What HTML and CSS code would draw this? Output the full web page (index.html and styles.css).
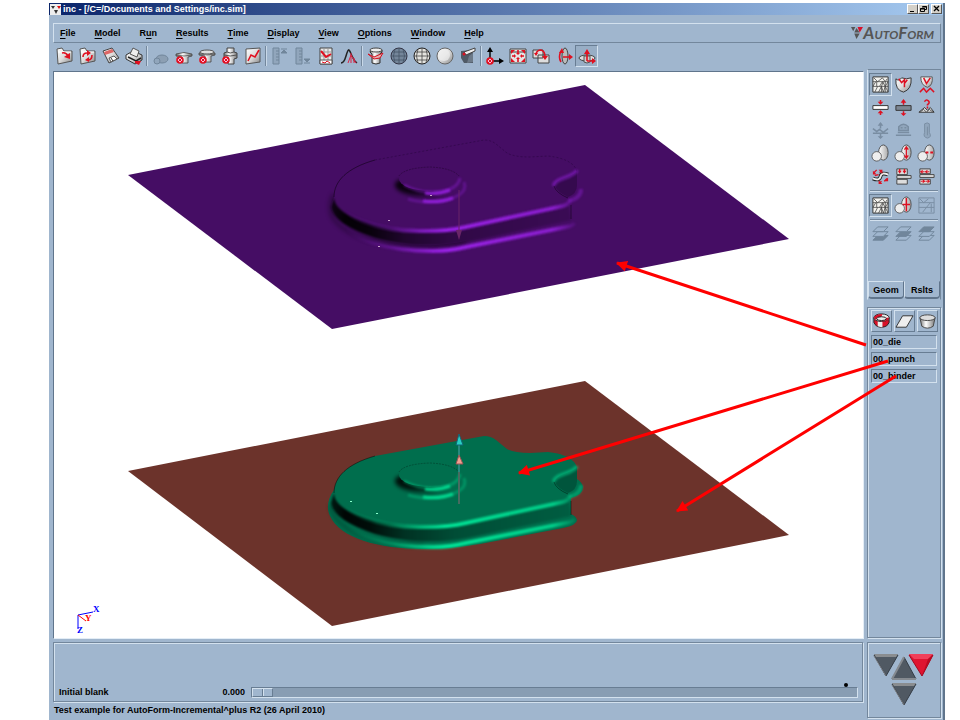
FILE: index.html
```html
<!DOCTYPE html>
<html lang="en">
<head>
<meta charset="utf-8">
<title>inc - [/C=/Documents and Settings/inc.sim]</title>
<link rel="stylesheet" href="styles.css">
</head>
<body>
<svg class="defs" aria-hidden="true">
  <defs>
    <linearGradient id="metal" x1="0" y1="0" x2="1" y2="1"><stop offset="0" stop-color="#fff"/><stop offset=".5" stop-color="#ddd"/><stop offset="1" stop-color="#888"/></linearGradient>
    <linearGradient id="tube" x1="0" y1="0" x2="1" y2="0"><stop offset="0" stop-color="#777"/><stop offset=".4" stop-color="#fff"/><stop offset="1" stop-color="#777"/></linearGradient>
    <linearGradient id="egg" x1="0" y1="0" x2="1" y2="0"><stop offset="0" stop-color="#fff"/><stop offset="1" stop-color="#aaa"/></linearGradient>
    <symbol id="folder" viewBox="0 0 20 20"><path d="M2 3l5-1 2 3 8 0v10l-14 3z" fill="url(#metal)" stroke="#555"/><path d="M3 6l13 0" stroke="#fff"/></symbol>
    <symbol id="mesh" viewBox="0 0 20 20"><path d="M2 2h16v16H2z" fill="#f2f2ee" stroke="#333"/><path d="M2 7h16M2 12h16M3 3l4 4 5-4 3 4 2-3M2 12l3-5M9 12l3-5 3 5 3-5M4 18l3-6M8 18l3-6 2 6 2-6 3 6M6 7v5M11 12v6M15 7v11M13 7l-2 5" fill="none" stroke="#444" stroke-width=".8"/></symbol>
    <symbol id="eggs" viewBox="0 0 20 20"><ellipse cx="13" cy="9" rx="5" ry="8" fill="url(#egg)" stroke="#333" stroke-width=".8"/><circle cx="6" cy="13" r="5" fill="#eee" stroke="#444" stroke-width=".8"/></symbol>
    <symbol id="press" viewBox="0 0 20 20"><path d="M2 7q8-3 16 0v2l-4 1v6H8v-6L2 9z" fill="url(#tube)" stroke="#444" stroke-width=".8"/><path d="M2 8q8 2 16 0" fill="none" stroke="#555" stroke-width=".8"/></symbol>
    <symbol id="target" viewBox="0 0 20 20"><circle cx="6" cy="14" r="3" fill="#fbd" stroke="#e01020" stroke-width="1.6"/><path d="M4 12l4 4m0-4-4 4" stroke="#e01020"/></symbol>
    <symbol id="ruler" viewBox="0 0 20 20"><path d="M3 2h6v16H3zM6 5h3M6 8h3M6 11h3M6 14h3" fill="#91a6bc" stroke="#71869b"/></symbol>
    <symbol id="layer" viewBox="0 0 20 20"><path d="M7 2h11l-5 5H2z"/></symbol>
    <symbol id="tri-gray" viewBox="0 0 26 24"><path d="M1 2h24L13 23z" fill="#505963" stroke="#343c45"/><path d="M1 1h24l-2 3H3z" fill="#8a8d90"/><path d="M1 3l12 20" stroke="#7a7d82"/></symbol>
  </defs>
</svg>

<div class="window">
  <header class="titlebar">
    <svg class="app-icon" viewBox="0 0 11 11"><path d="M0 0h11v11H0z" fill="#eee"/><path d="M1 2h4L3 5zM4 6h4L6 10z" fill="#333"/><path d="M7 2h4L9 5z" fill="#d11"/></svg>
    <span class="title">inc - [/C=/Documents and Settings/inc.sim]</span>
    <div class="window-buttons">
      <button aria-label="Minimize"><svg viewBox="0 0 9 9"><path d="M2 6h4v1H2z"/></svg></button>
      <button aria-label="Restore"><svg viewBox="0 0 9 9"><path d="M3.500 1.500h4v3h-2M3 2h5M1.500 3.500h4v3h-4zM1 4h5" fill="none" stroke="#000"/></svg></button>
      <button class="close" aria-label="Close"><svg viewBox="0 0 9 9"><path d="M2 1l5 5M7 1L2 6" stroke="#000" stroke-width="1.300"/></svg></button>
    </div>
  </header>

  <nav class="menubar">
    <button><u>F</u>ile</button><button><u>M</u>odel</button><button>R<u>u</u>n</button><button><u>R</u>esults</button><button><u>T</u>ime</button><button><u>D</u>isplay</button><button><u>V</u>iew</button><button><u>O</u>ptions</button><button><u>W</u>indow</button><button><u>H</u>elp</button>
    <div class="brand">
      <svg viewBox="0 0 11 11"><path d="M0 0h4L2 4zM3 5h5L5 1zM3 6h5l-3 5z" fill="#555"/><path d="M6 0h5L8 5z" fill="#d8102a"/></svg>
      <span>AutoForm</span>
    </div>
  </nav>

  <div class="toolbar" role="toolbar" aria-label="Main tools">
    <button aria-label="Open"><svg viewBox="0 0 20 20"><use href="#folder"/><path d="M7 7q4-1 6 3" fill="none" stroke="#e01020" stroke-width="1.500"/><path d="M15 7v6l-6-2z" fill="#e01020"/></svg></button>
    <button aria-label="Reopen"><svg viewBox="0 0 20 20"><use href="#folder"/><path d="M5 11q0-4 4-4M14 9q0 5-4 5" fill="none" stroke="#e01020" stroke-width="1.600"/><path d="M9 4l4 3-4 3zM11 11v5l-4-2z" fill="#e01020"/></svg></button>
    <button aria-label="Save"><svg viewBox="0 0 20 20"><path d="M2 5l9-3 7 10-10 5z" fill="url(#metal)" stroke="#444"/><path d="M3 6l8-3 2 3-9 3z" fill="#d66"/><path d="M8 12l5-2 3 3-6 3z" fill="#fff" stroke="#555"/><path d="M10 12l2 3" stroke="#333"/></svg></button>
    <button aria-label="Print"><svg viewBox="0 0 20 20"><path d="M2 9l7-4 9 4v5l-7 4-9-5z" fill="url(#metal)" stroke="#333"/><path d="M6 8l3-6 6 3-2 6z" fill="#eee" stroke="#555"/><path d="M4 11l8 4 5-3" fill="none" stroke="#222" stroke-width="1.500"/><path d="M11 15h6l-2 4-4-2z" fill="#e01020"/></svg></button>
    <i class="sep"></i>
    <button aria-label="Blank" disabled><svg viewBox="0 0 20 20"><ellipse cx="11" cy="13" rx="6" ry="4" fill="#8c9fb3" stroke="#71869b"/><circle cx="6" cy="15" r="3" fill="#91a6bc" stroke="#71869b"/></svg></button>
    <button aria-label="Process"><svg viewBox="0 0 20 20"><use href="#press" y="1"/><use href="#target"/></svg></button>
    <button aria-label="Tools"><svg viewBox="0 0 20 20"><use href="#press"/><ellipse cx="10" cy="6" rx="7" ry="2" fill="#ddd" stroke="#555"/><use href="#target"/></svg></button>
    <button aria-label="Stages"><svg viewBox="0 0 20 20"><path d="M7 2h7v4l3 1v5l-3 1v5H8v-6H4V7l3-1z" fill="url(#tube)" stroke="#444"/><path d="M4 9q6 2 13 0M7 6q3 2 7 0" fill="none" stroke="#555"/><use href="#target"/></svg></button>
    <button aria-label="Curve"><svg viewBox="0 0 20 20"><path d="M3 3l14-1v14l-14 2z" fill="url(#metal)" stroke="#555"/><path d="M5 15l3-6 4 2 4-7" fill="none" stroke="#e01020" stroke-width="1.600"/></svg></button>
    <i class="sep"></i>
    <button aria-label="Scale up" disabled><svg viewBox="0 0 20 20"><use href="#ruler"/><path d="M11 3h6M14 4l-3 3h6z" fill="#71869b" stroke="#71869b"/></svg></button>
    <button aria-label="Scale down" disabled><svg viewBox="0 0 20 20"><use href="#ruler"/><path d="M11 17h6M14 16l-3-3h6z" fill="#71869b" stroke="#71869b"/></svg></button>
    <button aria-label="Grid plot"><svg viewBox="0 0 20 20"><path d="M4 2h12v16H4z" fill="#e8e8e8" stroke="#444"/><path d="M8 2v12M12 2v12M4 6h12M4 10h12" stroke="#999"/><path d="M5 5l5 6 5-3" fill="none" stroke="#e01020" stroke-width="2"/><path d="M4 14h12v4H4z" fill="#fff" stroke="#555"/><path d="M6 16l3 1 2-2 3 2" fill="none" stroke="#e01020"/></svg></button>
    <button aria-label="Distribution"><svg viewBox="0 0 20 20"><path d="M2 17q3 0 5-7t3-6 3 6 5 7" fill="none" stroke="#222" stroke-width="1.500"/><path d="M12 7v10M15 12v5M12 9l5 8M9 17l3-8" stroke="#d24" fill="none"/></svg></button>
    <i class="sep"></i>
    <button aria-label="Section"><svg viewBox="0 0 20 20"><path d="M5 4h11v2l-2 2v9q-4 2-8 0V8L4 6z" fill="url(#tube)" stroke="#333"/><ellipse cx="10" cy="4" rx="6" ry="2" fill="#eee" stroke="#444"/><path d="M2 8l6 3 9-4-3 5-6 1z" fill="#e8b0b0" stroke="#d01020"/></svg></button>
    <button aria-label="Shaded mesh"><svg viewBox="0 0 20 20"><circle cx="10" cy="10" r="8" fill="#74869a" stroke="#334"/><path d="M2 10h16M3 6h14M3 14h14M10 2v16M6 3q-3 7 0 14M14 3q3 7 0 14" fill="none" stroke="#445366" stroke-width=".8"/></svg></button>
    <button aria-label="Wire mesh"><svg viewBox="0 0 20 20"><circle cx="10" cy="10" r="8" fill="#e4e4e0" stroke="#222"/><path d="M2 10h16M3 6h14M3 14h14M10 2v16M6 3q-3 7 0 14M14 3q3 7 0 14" fill="none" stroke="#444" stroke-width=".8"/></svg></button>
    <button aria-label="Shaded"><svg viewBox="0 0 20 20"><circle cx="10" cy="10" r="8" fill="url(#metal)" stroke="#666"/><circle cx="9" cy="9" r="6" fill="#eee" opacity=".7"/></svg></button>
    <button aria-label="Clip"><svg viewBox="0 0 20 20"><path d="M3 5l12-1v13H6L3 12z" fill="#505a66"/><path d="M6 6l11-4v3L8 9z" fill="#eee" stroke="#444"/><circle cx="6" cy="8" r="1.500" fill="#d12"/><path d="M11 10l4-3v9l-6 1z" fill="#6d7a88"/></svg></button>
    <i class="sep"></i>
    <button aria-label="Axes"><svg viewBox="0 0 20 20"><path d="M5 15V4M5 15h11" stroke="#000" stroke-width="1.400"/><path d="M5 1l3 5H2zM19 15l-5-3v6z"/><use href="#target" x="-1" y="1"/></svg></button>
    <button aria-label="Fit"><svg viewBox="0 0 20 20"><path d="M2 3h16v14H2zM2 6h16" fill="#e4e4e4" stroke="#444"/><path d="M10 4v3M10 13v3M4 10h3M13 10h3" stroke="#e01020" stroke-width="1.600"/><path d="M8 7h4l-2 2zM8 13h4l-2-2zM6 8v4l2-2zM14 8v4l-2-2zM3 4h4L3 8zM17 4h-4l4 4zM3 16h4l-4-4zM17 16h-4l4-4z" fill="#e01020"/></svg></button>
    <button aria-label="Zoom"><svg viewBox="0 0 20 20"><path d="M2 4h10v8H2zM7 9h11v8H7z" fill="#ddd" stroke="#444"/><path d="M5 8q1-4 5-4 4 1 4 7" fill="none" stroke="#e01020" stroke-width="1.600"/><path d="M11 10h6l-3 4zM3 7h4l-2 3z" fill="#e01020"/></svg></button>
    <button aria-label="Rotate"><svg viewBox="0 0 20 20"><ellipse cx="11" cy="10" rx="3" ry="8" fill="#bbb" stroke="#444"/><path d="M7 16q-3-5 0-11M9 11h7" fill="none" stroke="#e01020" stroke-width="1.600"/><path d="M8 2l2 5H5zM19 11l-4-3v6z" fill="#e01020"/></svg></button>
    <button class="pressed" aria-label="Rotate in plane"><svg viewBox="0 0 20 20"><ellipse cx="10" cy="12" rx="8" ry="3" fill="#ddd" stroke="#444"/><path d="M7 10h6v6q-3 2-6 0z" fill="#ccc" stroke="#555"/><path d="M10 15V7M10 15h5" stroke="#e01020" stroke-width="1.600"/><path d="M10 3l3 5H7zM19 15l-4-3v6z" fill="#e01020"/></svg></button>
  </div>

  <main class="workspace">
    <section class="viewport" aria-label="Tool geometry">
      <svg class="scene" viewBox="54 72 809 566">
        <defs>
          <filter id="soft" x="-20%" y="-30%" width="140%" height="160%"><feGaussianBlur stdDeviation="1.2"/></filter>
          <filter id="haze" x="-20%" y="-30%" width="140%" height="160%"><feGaussianBlur stdDeviation="2"/></filter>
          <linearGradient id="wall" gradientUnits="userSpaceOnUse" x1="330" y1="0" x2="580" y2="0"><stop offset="0" stop-opacity=".75"/><stop offset=".06" stop-opacity=".95"/><stop offset=".16" stop-opacity=".88"/><stop offset=".3" stop-opacity=".55"/><stop offset=".5" stop-opacity=".3"/><stop offset="1" stop-opacity=".14"/></linearGradient>
          <linearGradient id="glow" gradientUnits="userSpaceOnUse" x1="345" y1="0" x2="576" y2="0"><stop offset="0" stop-color="#fff" stop-opacity="0"/><stop offset=".2" stop-color="#fff" stop-opacity=".35"/><stop offset=".43" stop-color="#fff"/><stop offset=".9" stop-color="#fff" stop-opacity=".8"/><stop offset="1" stop-color="#fff" stop-opacity=".1"/></linearGradient>
          <mask id="fade" maskUnits="userSpaceOnUse" x="320" y="470" width="270" height="90"><path d="M320 470h270v90H320z" fill="url(#glow)"/></mask>
          <linearGradient id="boss" gradientUnits="userSpaceOnUse" x1="394" y1="0" x2="450" y2="0"><stop offset="0" stop-opacity=".9"/><stop offset=".3" stop-opacity=".8"/><stop offset="1" stop-opacity="0"/></linearGradient>
          <marker id="head" viewBox="0 0 10 10" refX="9" refY="5" markerWidth="12" markerHeight="11" markerUnits="userSpaceOnUse" orient="auto"><path d="M0 0l10 5-10 5z" fill="#f00"/></marker>
          <path id="flange" d="M334 490C328 498 326 508 330 516C340 538 378 549 424 549C450 549 464 546 480 544L563 528Q577 525 577 520Q576 516 571 514V498Q583 495 583 487Q582 482 577 479L540 470L340 480Z"/>
          <path id="body" d="M334 494C334 477 347 464 375 456L484 436Q491 436 496 440L507 449Q514 453 530 453L548 452C567 454 576 461 577 468V481Q576 488 569 492L571 498V516L466 537C440 543 405 543 375 534Q333 520 331 503Q331 498 334 494Z"/>
        </defs>
        <path class="die-sheet" d="M128 175L585 85L789 239L332 329Z"/>
        <path class="binder-sheet" d="M128 471L585 381L789 535L332 626Z"/>
        <g class="die part" transform="translate(0 -296)">
          <path d="M334 490C330 496 329 506 333 514C345 532 375 541 424 543L466 538" fill="none" stroke="#000" stroke-width="4" opacity=".3" filter="url(#haze)"/>
          <use href="#body"/>
          <path d="M375 456L484 436Q491 436 496 440L507 449Q514 453 530 453L548 452C567 454 576 461 577 468" fill="none" stroke="#2c0742" stroke-dasharray="2 2" opacity=".6"/>
          <g id="shade">
            <path d="M334 493C334 513 380 527 424 526L463 523L569 502L571 516L466 538C440 543 405 543 375 534Q333 520 331 503Z" fill="url(#wall)" filter="url(#soft)"/>
            <path d="M577 467C573 473 555 474 555 482Q557 488 568 493Q577 490 577 481Z" opacity=".22"/>
            <path d="M577 466C574 474 553 474 554 482" fill="none" stroke="currentColor" stroke-width="4" opacity=".45" filter="url(#soft)"/>
            <path d="M554 482Q556 489 568 494" fill="none" stroke="#000" opacity=".4"/>
            <path d="M569 497Q581 494 581 485" fill="none" stroke="currentColor" stroke-width="4" opacity=".35" filter="url(#soft)"/>
            <path d="M334 493C334 477 347 464 375 456" fill="none" stroke="#000" opacity=".45"/>
            <g mask="url(#fade)">
              <path d="M336 493C336 513 380 528 424 527Q450 527 466 523L563 502Q570 500 570 495" fill="none" stroke="currentColor" stroke-width="4" filter="url(#soft)"/>
              <path d="M334 512C349 537 390 547 433 547Q450 547 466 543L566 523Q573 522 575 519" fill="none" stroke="currentColor" stroke-width="4" filter="url(#soft)"/>
            </g>
            <path d="M571 501v14" stroke="#000" opacity=".4"/>
            <path d="M399 476C390 480 394 492 430 493Q450 492 458 478Z" fill="url(#boss)" filter="url(#haze)"/>
            <ellipse class="boss-top" cx="430" cy="475" rx="31" ry="12"/>
            <path d="M399 472Q404 464 430 463Q452 464 459 472" fill="none" stroke="#000" opacity=".25" stroke-dasharray="2 1"/>
            <path d="M404 481Q424 492 448 486Q459 482 460 474" fill="none" stroke="currentColor" stroke-width="3" opacity=".35" filter="url(#soft)"/>
            <path d="M425 489Q438 491 450 486M423 497Q440 499 453 494" fill="none" stroke="currentColor" stroke-width="3" opacity=".85" filter="url(#soft)"/>
            <path d="M408 495Q438 503 459 491Q467 486 464 478" fill="none" stroke="currentColor" stroke-width="3" opacity=".3" filter="url(#soft)"/>
          </g>
        </g>
        <g class="die-axis"><path d="M459 190v42" stroke="#6a2568"/><path d="M456 230h6l-3 10z" fill="#6a2568"/></g>
        <path d="M388 220h2v1h-2zM378 246h2v1h-2zM430 195h2v1h-2z" fill="#c8a0c8"/>
        <g class="punch part">
          <use href="#flange"/>
          <path d="M330 505C334 530 375 546 424 545" fill="none" stroke="#000" stroke-width="3" opacity=".3" filter="url(#haze)"/>
          <use href="#body"/>
          <use href="#shade"/>
        </g>
        <path d="M459 472v32" stroke="#476b60" stroke-width="2"/>
        <path d="M459 445v27" stroke="#27897f" stroke-width="2"/>
        <path d="M459 434l4 11h-7z" fill="#28cfc4" stroke="#167"/>
        <path d="M459 455l4 9h-7z" fill="#f0a090" stroke="#955"/>
        <path d="M350 501h2v1h-2zM376 513h2v1h-2z" fill="#8fc"/>
        <g fill="none"><path d="M78 615l15-3M78 615v14" stroke="#00f"/><path d="M78 615l8 6" stroke="#f00"/></g>
        <text class="triad-label" x="93" y="612" fill="#00f">X</text><text class="triad-label" x="85" y="621" fill="#f00">Y</text><text class="triad-label" x="77" y="633" fill="#00f">Z</text>
        <g class="callouts"><path d="M866 345L617 263" marker-end="url(#head)"/><path d="M888 361L519 473" marker-end="url(#head)"/><path d="M896 376L677 511" marker-end="url(#head)"/></g>
      </svg>
    </section>

    <aside class="side">
      <div class="palette">
        <div class="tool-grid">
          <button class="pressed" aria-label="Mesh"><svg viewBox="0 0 20 20"><use href="#mesh"/></svg></button>
          <button aria-label="Formability"><svg viewBox="0 0 20 20"><path d="M2 4q3 3 6-1l5 1 5-1q1 12-8 15Q1 16 2 4z" fill="url(#metal)" stroke="#333"/><path d="M5 4l3 4 3-3v8M11 9l3-4" fill="none" stroke="#d12" stroke-width="1.600"/></svg></button>
          <button aria-label="Failure"><svg viewBox="0 0 20 20"><path d="M4 2h12q1 9-5 11-7-2-7-11z" fill="url(#metal)" stroke="#555"/><path d="M7 3l3 6 4-6M3 18l4-4 3 4 4-4 4 4" fill="none" stroke="#d12" stroke-width="1.600"/></svg></button>
          <button aria-label="Thickness"><svg viewBox="0 0 20 20"><path d="M2 8h16v4H2z" fill="#fff" stroke="#333"/><path d="M10 2v4M10 14v4" stroke="#d12" stroke-width="1.600"/><path d="M7 4h6l-3 3zM7 16h6l-3-3z" fill="#d12"/></svg></button>
          <button aria-label="Thinning"><svg viewBox="0 0 20 20"><path d="M2 8h16v5H2z" fill="#7d8793" stroke="#333"/><path d="M10 3v4M10 14v4" stroke="#d12" stroke-width="1.600"/><path d="M7 5l3-4 3 4zM7 16h6l-3 3z" fill="#d12"/></svg></button>
          <button aria-label="Wrinkles"><svg viewBox="0 0 20 20"><path d="M2 15l6-5 3 3 3-3 4 5z" fill="#ddd" stroke="#333"/><path d="M3 15l4-3 3 3 3-3 4 3" fill="none" stroke="#555"/><path d="M8 4q1-3 4-1 2 2-1 4v1M11 9v2" fill="none" stroke="#d12" stroke-width="1.600"/></svg></button>
          <button disabled aria-label="Springback"><svg viewBox="0 0 20 20"><path d="M2 8l4 3 3-2 4 3 5-4M2 13h16M10 3v5M10 13v5" fill="none" stroke="#798da2" stroke-width="1.600"/><path d="M7 5l3-4 3 4zM7 16h6l-3 3z" fill="#798da2"/></svg></button>
          <button disabled aria-label="Pressure"><svg viewBox="0 0 20 20"><path d="M2 15h16M4 12h12M5 6q5-5 10 0v4H5zM7 7h2M11 7h2" fill="#91a6bc" stroke="#798da2" stroke-width="1.600"/></svg></button>
          <button disabled aria-label="Temperature"><svg viewBox="0 0 20 20"><path d="M8 12V3q3-2 5 0v9q3 5-2 6-5-1-3-6zM11 6v9" fill="#91a6bc" stroke="#798da2"/></svg></button>
          <button aria-label="Strain"><svg viewBox="0 0 20 20"><use href="#eggs"/></svg></button>
          <button aria-label="Major strain"><svg viewBox="0 0 20 20"><use href="#eggs"/><path d="M13 3v12M11 6l2-3 2 3M11 12l2 3 2-3" fill="none" stroke="#d12" stroke-width="1.300"/></svg></button>
          <button aria-label="Minor strain"><svg viewBox="0 0 20 20"><use href="#eggs"/><path d="M9 9h3M14 9h3" stroke="#d12" stroke-width="2"/></svg></button>
          <button aria-label="Displacement"><svg viewBox="0 0 20 20"><path d="M2 12q7 3 8-2t8-2" fill="none" stroke="#222" stroke-width="4"/><path d="M2 12q7 3 8-2t8-2" fill="none" stroke="#eee" stroke-width="2"/><path d="M3 6l3-3M9 6l2-2M9 17l2-2M14 15l3-3M4 9l4-1" fill="none" stroke="#d12" stroke-width="1.400"/><path d="M2 4v4h4zM8 3h4v4zM8 14v4h4zM18 11v4h-4z" fill="#d12"/></svg></button>
          <button aria-label="Stress"><svg viewBox="0 0 20 20"><path d="M3 9h15v3H3zM3 13h11v5H3zM3 2h11v6H3z" fill="#ddd" stroke="#444"/><path d="M6 2v3M11 2v3" stroke="#d12" stroke-width="1.500"/><path d="M4 4h4L6 7zM9 4h4l-2 3z" fill="#d12"/></svg></button>
          <button aria-label="Friction"><svg viewBox="0 0 20 20"><path d="M3 8h15v3H3zM3 13h11v5H3zM3 2h11v5H3z" fill="#ddd" stroke="#444"/><path d="M3 5l3-2v4zM8 5l3-2v4zM9 15l-3-2v4zM14 15l-3-2v4z" fill="#d12"/><path d="M6 5h2M11 5h2M4 15h2M9 15h2" stroke="#d12"/></svg></button>
        </div>
        <hr>
        <div class="tool-grid">
          <button class="pressed" aria-label="Scalar"><svg viewBox="0 0 20 20"><use href="#mesh"/></svg></button>
          <button aria-label="Vector"><svg viewBox="0 0 20 20"><use href="#eggs"/><path d="M13 2v14M9 9h8" stroke="#d12" stroke-width="1.600"/></svg></button>
          <button disabled aria-label="Difference"><svg viewBox="0 0 20 20"><path d="M2 2h16v16H2zM2 7h16M2 12h16M3 3l4 4 5-4M6 17l8-10M15 8v9" fill="none" stroke="#798da2"/></svg></button>
        </div>
        <hr>
        <div class="tool-grid layers">
          <button disabled aria-label="Lower face"><svg viewBox="0 0 20 20"><use href="#layer" class="solid" y="9"/><use href="#layer" class="open" y="5"/><use href="#layer" class="open"/></svg></button>
          <button disabled aria-label="Middle face"><svg viewBox="0 0 20 20"><use href="#layer" class="open" y="9"/><use href="#layer" class="solid" y="5"/><use href="#layer" class="open"/></svg></button>
          <button disabled aria-label="Upper face"><svg viewBox="0 0 20 20"><use href="#layer" class="open" y="9"/><use href="#layer" class="open" y="5"/><use href="#layer" class="solid"/></svg></button>
        </div>
        <div class="tabs"><button>Geom</button><button class="active">Rslts</button></div>
      </div>

      <div class="objects">
        <div class="object-kinds">
          <button aria-label="Tools"><svg viewBox="0 0 20 20"><path d="M2 6v5q2 5 8 5t8-5V6z" fill="#d81028" stroke="#222"/><path d="M6 9v6q3 1 5 1v-6z" fill="#eee"/><ellipse cx="10" cy="6" rx="8" ry="4" fill="#eee" stroke="#222"/><path d="M2 6q1-4 9-4l-1 3-4 3q-3 0-4-2zM10 10q7 0 8-4l-4 0-4 2z" fill="#d81028"/><ellipse cx="10" cy="7" rx="5" ry="2" fill="#eee" stroke="#222"/></svg></button>
          <button aria-label="Sheet"><svg viewBox="0 0 20 20"><path d="M8 4h11l-7 12H1z" fill="#eee" stroke="#333"/></svg></button>
          <button aria-label="Part"><svg viewBox="0 0 20 20"><path d="M2 6l2 9q6 4 12 0l2-9z" fill="url(#tube)" stroke="#444"/><ellipse cx="10" cy="6" rx="8" ry="3" fill="#ddd" stroke="#444"/></svg></button>
        </div>
        <button class="object">00_die</button>
        <button class="object">00_punch</button>
        <button class="object">00_binder</button>
      </div>
    </aside>

    <section class="timeline">
      <label for="time">Initial blank</label>
      <output for="time">0.000</output>
      <div class="track"><input id="time" type="range" min="0" max="100" value="0"><i class="dot"></i></div>
    </section>

    <div class="nav-pad">
      <svg viewBox="0 0 62 54" role="img" aria-label="AutoForm">
        <use href="#tri-gray" x="0" y="0" width="26" height="24"/>
        <path d="M19 26h24L31 4z" fill="#505963" stroke="#343c45"/><path d="M19 26L31 4M19 26h24" stroke="#858a90" stroke-width="2"/>
        <path d="M36 2h24L49 23z" fill="#df1430" stroke="#a00820"/><path d="M36 1h24l-5 5H41z" fill="#f0405a"/><path d="M49 23l6-17 5-4z" fill="#b80a22"/>
        <use href="#tri-gray" x="18" y="29" width="26" height="24"/>
      </svg>
    </div>
    <footer class="status">Test example for AutoForm-Incremental^plus R2 (26 April 2010)</footer>
  </main>
</div>
</body>
</html>
```
FILE: styles.css
```css
* { box-sizing: border-box; }

body {
  margin: 0;
  background: #fff;
  color: #000;
  font: bold 9px/12px "Liberation Sans", sans-serif;
}

button {
  margin: 0;
  padding: 0;
  border: 0;
  background: none;
  color: inherit;
  font: inherit;
}

svg { display: block; }
.defs { position: absolute; width: 0; height: 0; }

.window {
  display: flex;
  flex-direction: column;
  min-height: calc(100vh - 3px);
  margin: 3px 15px 0 49px;
  border-right: 2px solid #60758c;
  border-bottom: 1px solid #60758c;
  background: #a0b6ce;
}

.titlebar {
  display: flex;
  align-items: center;
  gap: 2px;
  height: 12px;
  padding: 0 1px;
  background: linear-gradient(90deg, #0a246a, #a6caf0);
  color: #fff;
}
.app-icon { width: 11px; height: 11px; }
.title { flex: 1; }
.window-buttons { display: flex; }
.window-buttons button {
  width: 11px;
  height: 10px;
  border: 1px solid;
  border-color: #fff #555 #555 #fff;
  background: #d4d0c8;
}
.window-buttons .close { margin-left: 2px; }

.menubar {
  display: flex;
  align-items: center;
  gap: 19px;
  height: 20px;
  margin: 8px 2px 0 4px;
  padding: 0 6px;
  border: 1px solid;
  border-color: #d3e1ee #73879c #73879c #d3e1ee;
}
.menubar u { text-underline-offset: 2px; }
.brand {
  display: flex;
  align-items: center;
  margin-left: auto;
  color: #555;
  font: italic 700 17px/18px Lato, sans-serif;
  font-variant: small-caps;
}
.brand svg { width: 12px; height: 12px; }

.toolbar {
  display: flex;
  align-items: center;
  height: 26px;
  margin-left: 4px;
}
.toolbar button {
  display: grid;
  place-items: center;
  width: 23px;
  height: 22px;
}
.toolbar svg { width: 20px; height: 20px; }
.sep {
  width: 2px;
  height: 20px;
  margin: 0 1px;
  border-left: 1px solid #73879c;
  border-right: 1px solid #c8d8e8;
}
.pressed {
  border: 1px solid;
  border-color: #687d93 #d3e1ee #d3e1ee #687d93;
  background: #98aec5;
}

.workspace {
  flex: 1;
  display: grid;
  grid-template-columns: 1fr 74px;
  grid-template-rows: 1fr 60px 16px;
  column-gap: 3px;
  padding: 0 2px 2px 4px;
}

.viewport {
  position: relative;
  z-index: 2;
  margin: 2px 0 3px;
  border: 1px solid;
  border-color: #60758c #e3edf6 #e3edf6 #60758c;
  background: #fff;
  pointer-events: none;
}
.scene { width: 100%; overflow: visible; }
.die-sheet { fill: #450d64; }
.binder-sheet { fill: #6c332b; }
.part { fill: var(--face); }
.die { --face: #450d64; color: #9b20e8; }
.punch { --face: #006e4d; color: #00e698; }
.boss-top { fill: var(--face); }
#shade { fill: #000; }
.triad-label { font: bold 9px "Liberation Serif", serif; }
.callouts { fill: none; stroke: #f00; stroke-width: 3px; }

.side {
  display: flex;
  flex-direction: column;
  gap: 7px;
  margin-bottom: 4px;
}
.palette {
  display: flex;
  flex-direction: column;
  height: 231px;
  border: 1px solid;
  border-color: #73879c #73879c transparent #d3e1ee;
}
.tool-grid {
  display: grid;
  grid-template-columns: repeat(3, 23px);
  grid-auto-rows: 23px;
  padding-left: 1px;
}
.palette > .tool-grid:first-child { padding-top: 3px; }
.tool-grid button { display: grid; place-items: center; }
.tool-grid svg { width: 19px; height: 19px; }
hr {
  width: 68px;
  height: 2px;
  margin: 2px;
  border: 0;
  border-top: 1px solid #73879c;
  border-bottom: 1px solid #d3e1ee;
}
.solid { fill: #71869b; stroke: #71869b; }
.open { fill: #a0b6ce; stroke: #71869b; }

.tabs { display: flex; margin-top: auto; }
.tabs button {
  flex: 1;
  height: 18px;
  border: 1px solid;
  border-color: #d3e1ee #60758c #60758c #d3e1ee;
  border-bottom-width: 2px;
  border-radius: 0 0 4px 4px;
}
.tabs .active { border-top-color: transparent; }

.objects {
  flex: 1;
  display: flex;
  flex-direction: column;
  gap: 3px;
  padding: 2px 3px;
  border: 1px solid #73879c;
  box-shadow: inset 1px 1px #d3e1ee, 1px 1px #d3e1ee;
}
.object-kinds { display: flex; gap: 2px; }
.object-kinds button {
  display: grid;
  place-items: center;
  flex: 1;
  height: 22px;
  border: 1px solid;
  border-color: #d3e1ee #687d93 #687d93 #d3e1ee;
}
.object-kinds svg { width: 19px; height: 19px; }
.object {
  height: 14px;
  padding-left: 1px;
  border: 1px solid;
  border-color: #687d93 #d3e1ee #d3e1ee #687d93;
  text-align: left;
}

.timeline {
  display: flex;
  align-items: flex-end;
  margin-right: 1px;
  padding: 0 4px 3px 5px;
  border: 1px solid #73879c;
  box-shadow: inset 1px 1px #d3e1ee, 1px 1px #d3e1ee;
}
.timeline label { width: 128px; }
.timeline output { width: 59px; padding-right: 1px; text-align: right; }
.track { position: relative; flex: 1; margin-left: 5px; }
#time {
  display: block;
  width: 100%;
  height: 11px;
  margin: 0;
  appearance: none;
  border: 1px solid;
  border-color: #687d93 #d3e1ee #d3e1ee #687d93;
  background: #889db3;
}
#time::-webkit-slider-thumb {
  appearance: none;
  width: 21px;
  height: 9px;
  border: 1px solid;
  border-color: #d3e1ee #687d93 #687d93 #d3e1ee;
  background: linear-gradient(90deg, #a0b6ce 9px, #687d93 9px 10px, #d3e1ee 10px 11px, #a0b6ce 11px);
}
.dot {
  position: absolute;
  right: 10px;
  top: -4px;
  width: 4px;
  height: 4px;
  border-radius: 50%;
  background: #000;
}

.nav-pad {
  grid-column: 2;
  grid-row: 2 / 4;
  display: grid;
  place-items: center;
  border: 1px solid #73879c;
  box-shadow: inset 1px 1px #d3e1ee, 1px 1px #d3e1ee;
}
.nav-pad svg { width: 62px; height: 54px; }

.status { grid-column: 1; grid-row: 3; padding: 2px 1px 0; }
```
